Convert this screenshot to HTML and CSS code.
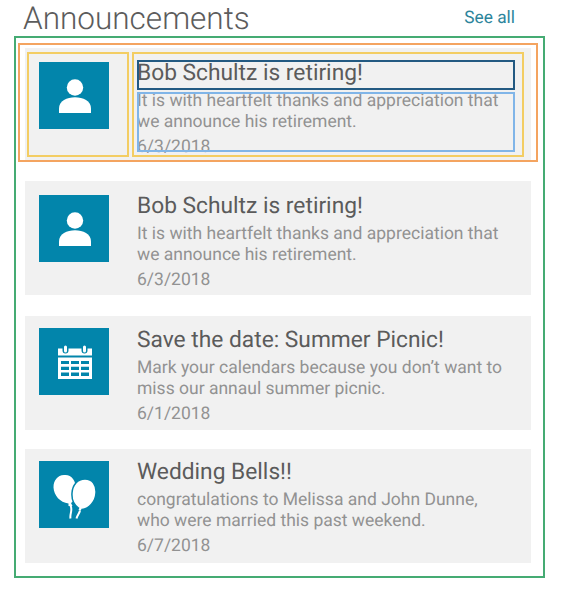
FILE: index.html
```html
<!DOCTYPE html>
<html lang="en">
<head>
<meta charset="utf-8">
<title>Announcements</title>
<link rel="stylesheet" href="styles.css">
</head>
<body>
<header class="header">
  <h1 class="heading">Announcements</h1>
  <a class="see-all">See all</a>
</header>
<main class="list">
  <article class="card card-outlined">
    <div class="tile"><svg viewBox="0 0 70 67"><circle cx="36" cy="25.500" r="8.200"/><path d="M20 51V46.500C20 39 28 35.300 36 35.300S52 39 52 46.500V51Z"/></svg></div>
    <div class="content">
      <h2 class="title">Bob Schultz is retiring!</h2>
      <p class="text">It is with heartfelt thanks and appreciation that<br>we announce his retirement.</p>
      <p class="date">6/3/2018</p>
    </div>
    <div class="outline outline-card"></div>
    <div class="outline outline-media"></div>
    <div class="outline outline-content"></div>
    <div class="outline outline-title"></div>
    <div class="outline outline-text"></div>
  </article>
  <article class="card card-person">
    <div class="tile"><svg viewBox="0 0 70 67"><circle cx="36" cy="25.500" r="8.200"/><path d="M20 51V46.500C20 39 28 35.300 36 35.300S52 39 52 46.500V51Z"/></svg></div>
    <div class="content">
      <h2 class="title">Bob Schultz is retiring!</h2>
      <p class="text">It is with heartfelt thanks and appreciation that<br>we announce his retirement.</p>
      <p class="date">6/3/2018</p>
    </div>
  </article>
  <article class="card card-event">
    <div class="tile"><svg viewBox="0 0 70 67">
      <path d="M19 20.500H53V27.500H19ZM19 29.500H53V51H19Z"/>
      <path class="ring-gap" d="M26.500 18V22.500M45.500 18V22.500"/>
      <path class="ring" d="M26.500 19V23M45.500 19V23"/>
      <path class="hole" d="M22 33H30V36H22ZM32 33H40V36H32ZM42 33H50V36H42ZM22 38.700H30V42H22ZM32 38.700H40V42H32ZM42 38.700H50V42H42ZM22 44.500H30V48H22ZM32 44.500H40V48H32ZM42 44.500H50V48H42Z"/>
    </svg></div>
    <div class="content">
      <h2 class="title">Save the date: Summer Picnic!</h2>
      <p class="text">Mark your calendars because you don’t want to<br>miss our annaul summer picnic.</p>
      <p class="date">6/1/2018</p>
    </div>
  </article>
  <article class="card card-wedding">
    <div class="tile"><svg viewBox="0 0 70 67">
      <path d="M25 14C32 13 37 19 37 28C37 36 35 40.500 32 42L33.500 45H29.500L29.500 42.500C21 41.500 15 34.500 14.500 26.500C14.500 19 18.500 14.500 25 14Z"/>
      <path class="string" d="M31.500 44.500C34 49 30.500 53 31.500 57.500"/>
      <path class="balloon-front" d="M46 18C53.500 18 57.500 24 57 32C56.500 41 50 47.500 43 48.500L42.500 50.500L38.500 49.500L39.500 47C35 44 32.500 39 33 32C33.500 24 38.500 18 46 18Z"/>
      <path class="string" d="M41 49.500C40.500 52.500 38 54.500 37.500 57.500"/>
    </svg></div>
    <div class="content">
      <h2 class="title">Wedding Bells!!</h2>
      <p class="text">congratulations to Melissa and John Dunne,<br>who were married this past weekend.</p>
      <p class="date">6/7/2018</p>
    </div>
  </article>
</main>
</body>
</html>
```
FILE: styles.css
```css
* { box-sizing: border-box; margin: 0; padding: 0; }
body {
  width: 563px; height: 594px; overflow: hidden;
  background: #fff; font-family: Roboto, sans-serif;
  text-rendering: geometricPrecision;
}
.header {
  display: flex; justify-content: space-between; align-items: flex-start;
  height: 36px; padding: 0 48px 0 23px;
}
.heading { font-size: 31.5px; font-weight: 300; line-height: 38px; color: #5c5c5c; }
.see-all { padding-top: 8px; font-size: 17.3px; line-height: 20px; color: #2d859c; }
.list {
  display: flex; flex-direction: column;
  width: 531px; height: 542px; margin-left: 14px; padding: 10px 13px 0 9px;
  border: 2px solid #45ab73;
}
.card {
  position: relative; display: flex; gap: 28px; flex: none;
  width: 506px; height: 114px; padding: 12px 14px 0; background: #f1f1f1;
}
.card-outlined { height: 113px; margin-bottom: 20px; padding-top: 14px; }
.card-person { padding-top: 14px; margin-bottom: 21px; }
.card-event { margin-bottom: 19px; }
.tile { flex: none; width: 70px; height: 67px; background: #0285ab; }
.tile svg { display: block; width: 70px; height: 67px; fill: #fff; }
.tile .ring-gap { stroke: #0285ab; stroke-width: 6px; stroke-linecap: round; }
.tile .ring { stroke: #fff; stroke-width: 3px; stroke-linecap: round; }
.tile .hole { fill: #0285ab; }
.tile .string { fill: none; stroke: #fff; stroke-width: 2px; }
.tile .balloon-front { stroke: #0285ab; stroke-width: 1.5px; }
.content { margin-top: -1px; white-space: nowrap; }
.card-outlined .content, .card-person .content { margin-top: -2px; }
.card-wedding .content { margin-top: -2px; }
.title { font-size: 22.75px; font-weight: 400; line-height: 26px; color: #5b5b5b; }
.text { margin-top: 5px; font-size: 17.5px; line-height: 21px; color: #929292; }
.date { margin-top: 4px; font-size: 17.5px; line-height: 21px; color: #929292; }
.outline { position: absolute; border: 2px solid; }
.outline-card { left: -7px; top: -5px; width: 520px; height: 119px; border-color: #f4a460; }
.outline-media { left: 2px; top: 4px; width: 102px; height: 105px; border-color: #f3cd63; }
.outline-content { left: 107px; top: 4px; width: 392px; height: 105px; border-color: #f3cd63; }
.outline-title { left: 112px; top: 12px; width: 378px; height: 30px; border-color: #235a82; }
.outline-text { left: 112px; top: 44px; width: 378px; height: 60px; border-color: #80b5e8; }
```
